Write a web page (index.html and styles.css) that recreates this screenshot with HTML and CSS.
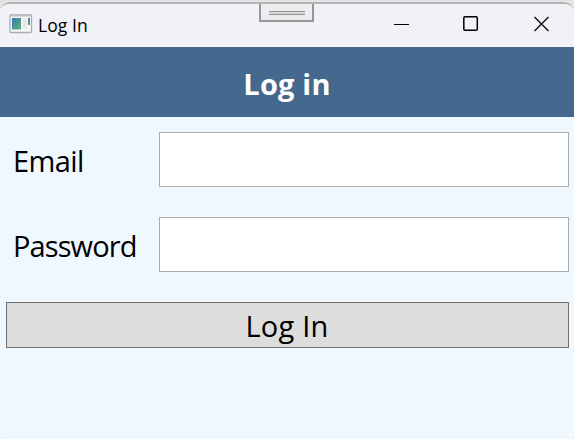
FILE: index.html
```html
<!DOCTYPE html>
<html lang="en">
<head>
<meta charset="utf-8">
<title>Log In</title>
<link rel="stylesheet" href="styles.css">
</head>
<body>
<div class="window">
  <header class="titlebar">
    <svg class="app-icon" width="24" height="20" viewBox="0 0 24 20">
      <defs>
        <linearGradient id="pane" x1="0" y1="0" x2="1" y2="1">
          <stop offset="0" stop-color="#3f78b0"/>
          <stop offset="1" stop-color="#5cb377"/>
        </linearGradient>
      </defs>
      <rect x="1" y="1" width="21.500" height="17.500" rx="1" fill="#f7f7f7" stroke="#a9adb3" stroke-width="1.300"/>
      <path d="M2 2.500h19.500" stroke="#d5d8dd"/>
      <rect x="3" y="4" width="9" height="11.500" fill="url(#pane)"/>
      <path d="M14 4h4v11h-4z" fill="#e8e8e8"/>
      <path d="M19 4h2v7h-2z" fill="url(#pane)"/>
    </svg>
    <span class="title">Log In</span>
    <div class="controls">
      <svg width="16" height="16" viewBox="0 0 16 16"><path d="M1 8.500h15" stroke="#000"/></svg>
      <svg width="16" height="16" viewBox="0 0 16 16"><rect x=".8" y=".8" width="13.500" height="13.500" rx="1.200" fill="none" stroke="#000" stroke-width="1.500"/></svg>
      <svg width="16" height="16" viewBox="0 0 16 16"><path d="M1.500 1l14 14M15.500 1L1.500 15" stroke="#15151f" stroke-width="1.500"/></svg>
    </div>
    <div class="grip"><div class="grip-bar"></div></div>
  </header>
  <h1 class="banner"><span>Log in</span></h1>
  <form class="form">
    <label class="label" for="email">Email</label>
    <input class="field" id="email" type="text">
    <label class="label label-password" for="password">Password</label>
    <input class="field" id="password" type="password">
    <button class="submit" type="button">Log In</button>
  </form>
</div>
</body>
</html>
```

FILE: styles.css
```css
* { box-sizing: border-box; }
body {
  margin: 0;
  height: 439px;
  overflow: hidden;
  padding-top: 2px;
  background: #e4e4e4;
  font-family: "Open Sans", "Noto Sans", sans-serif;
  color: #000;
}
.window {
  height: 437px;
  overflow: hidden;
  border-top: 2px solid #b3b3b3;
  border-radius: 10px 10px 3px 3px;
  background: #eff7ff;
}
.titlebar {
  position: relative;
  display: flex;
  align-items: center;
  height: 43px;
  padding: 0 25px 0 9px;
  background: #f1f2f8;
}
.app-icon { margin-top: -3px; }
.title {
  margin-left: 5px;
  margin-top: -2px;
  font-size: 17.5px;
  letter-spacing: 0.1px;
}
.controls {
  display: flex;
  gap: 54px;
  margin-left: auto;
  margin-top: -3px;
}
.controls svg { display: block; }
.grip {
  position: absolute;
  left: 259px;
  top: -2px;
  width: 55px;
  height: 20px;
  padding: 7px 8px;
  border: 2px solid #969696;
  background: #ededf0;
}
.grip-bar {
  height: 4px;
  width: 36px;
  border-top: 1px solid #969696;
  border-bottom: 1px solid #969696;
  background: #d6d6d8;
}
.banner {
  display: flex;
  align-items: center;
  justify-content: center;
  height: 70px;
  margin: 0;
  padding-top: 2px;
  background: #45688e;
  color: #fff;
  font-size: 29px;
  font-weight: 700;
  letter-spacing: 0.2px;
}
.form {
  display: grid;
  grid-template-columns: 153px 410px;
  grid-template-rows: 55px 55px 46px;
  row-gap: 30px;
  padding: 15px 5px 0 6px;
}
.label {
  display: flex;
  align-items: center;
  padding-left: 7px;
  padding-top: 2px;
  font-size: 29px;
  letter-spacing: -0.6px;
}
.label-password { letter-spacing: -0.9px; }
.field {
  width: 410px;
  height: 55px;
  margin: 0;
  padding: 4px 8px;
  border: 1px solid #abadb3;
  border-radius: 0;
  background: #fff;
  font: inherit;
  font-size: 29px;
  outline: none;
}
.submit {
  grid-column: 1 / 3;
  display: flex;
  align-items: center;
  justify-content: center;
  padding: 1px 1px 0 0;
  border: 1px solid #707070;
  border-radius: 0;
  background: #ddd;
  font: inherit;
  font-size: 29px;
  letter-spacing: 0.2px;
  color: #000;
}
```
